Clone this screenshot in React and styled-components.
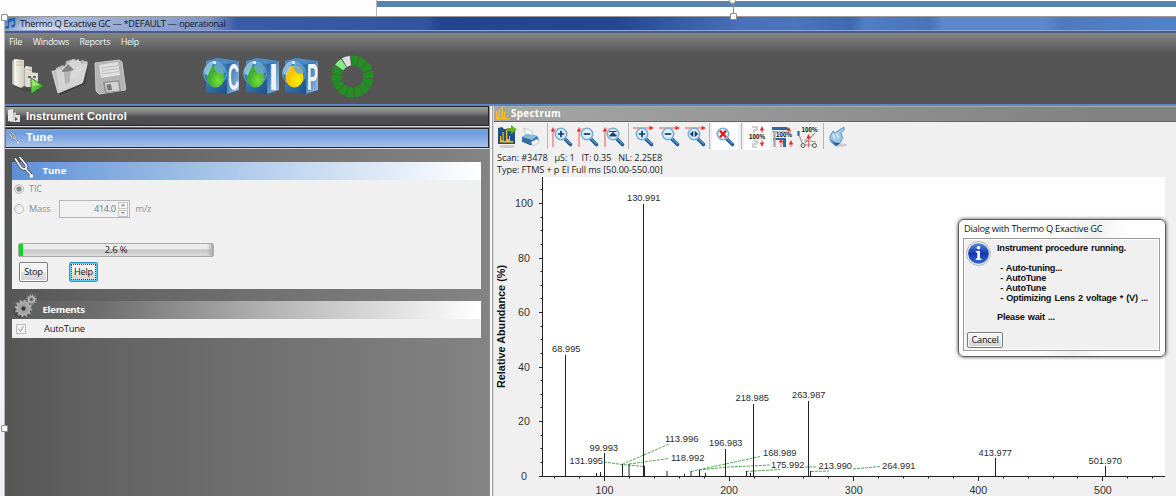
import React from "react";
import styled, { createGlobalStyle } from "styled-components";

const ui = '"Open Sans", "Noto Sans", sans-serif';
const arial = '"Liberation Sans", Arial, sans-serif';

const Global = createGlobalStyle`
  * { box-sizing: border-box; }
  body { margin: 0; background: #fdfdfe; overflow: hidden; }
  svg { display: block; flex: none; overflow: visible; }
`;

const Page = styled.div`
  position: relative; width: 1176px; height: 496px; overflow: hidden;
  display: flex; flex-direction: column;
  background: linear-gradient(180deg, #fdfdfe 20%, #eef0f4 100%);
  font-family: ${ui};
`;
const Ruler = styled.div`
  height: 16px; flex: none; padding-left: 376px; background: #fdfdfe;
`;
const RulerPage = styled.div`
  height: 16px; border-left: 1px solid #b4b8bc; padding-top: 1px; background: #fff;
`;
const RulerBar = styled.div`height: 6px; background: #5a82ae;`;
const AppWindow = styled.div`
  margin-left: 4px; flex: 1; min-height: 0; display: flex; flex-direction: column;
  border-left: 1px solid #b4b4b4; border-top: 1px solid #9c9894; background: #555;
`;
const TitleBar = styled.div`
  height: 16px; flex: none; display: flex; align-items: center; gap: 4px;
  padding: 0 0 1px 0; border-bottom: 2px solid #4a5c88; box-shadow: inset 0 -1px #8fa6d8;
  background:
    radial-gradient(ellipse 55px 16px at 35px 16px, rgba(255,255,255,.75), transparent),
    linear-gradient(90deg, #5878b8 0, #8ca0cc 18px, #a9b8da 60px, #8fa2cf 150px, #7f95c8 205px, #3a5ba5 232px, #33549f 420px, #23458d 436px, #24478f 610px, #3059a0 660px, #4a72b8 740px, #4a74bb 790px, #3f69b1 845px, #527ec4 860px, #4a74b8 925px, #5c87ca 938px, #5c87ca 1040px, #4f7bbd 1056px, #5482c8 1176px);
`;
const Title = styled.span`
  font-size: 9.4px; line-height: 14px; color: #101828; letter-spacing: -0.34px; white-space: nowrap;
`;
const MenuBar = styled.div`
  height: 19px; flex: none; display: flex; align-items: center; gap: 10.500px; padding: 0 0 1px 4px;
  background: linear-gradient(180deg, #848484, #585858);
  font-size: 9px; line-height: 14px; color: #f2f2f2; letter-spacing: -0.28px;
`;
const MainTools = styled.div`
  height: 54px; flex: none; display: flex; align-items: flex-start; padding: 6px 0 0 6px;
  background: #555; border-bottom: 2px solid #5a86c8;
`;
const Gap = styled.div`width: ${p => p.$w}px; flex: none;`;
const Body = styled.div`flex: 1; min-height: 0; display: flex;`;
const Left = styled.div`
  width: 484px; flex: none; display: flex; flex-direction: column;
  background: linear-gradient(90deg, #565656 0, #626262 90px, #838383 480px);
`;
const Splitter = styled.div`
  width: 5px; flex: none; background: linear-gradient(90deg, #8c8c8c 0 1px, #f4f4f4 1px 3px, #a2a2a2 3px 4px, #d8d8d8 4px);
`;
const Section = styled.div`
  height: 20px; flex: none; display: flex; align-items: center; gap: 5px; padding-left: 2px;
  border: 1px solid #24262c; border-left-color: #777;
  margin-bottom: ${p => (p.$active ? 0 : 2)}px;
  background: ${p => p.$active
    ? "linear-gradient(180deg, #7ba6e0 0, #6f9cdb 4px, #88aee2 60%, #a4c3ec)"
    : "linear-gradient(180deg, #a0a0a0 0, #787878 35%, #505050 55%, #4a4a4a)"};
  box-shadow: 0 1px #dcdcdc;
  padding-bottom: ${p => (p.$active ? 1 : 0)}px;
  font: bold 11px/17px ${arial}; color: #fff; letter-spacing: ${p => (p.$active ? 0.5 : 0.1)}px;
`;
const Panel = styled.div`margin: ${p => p.$top}px 8px 0 7px; flex: none;`;
const PanelHead = styled.div`
  height: 18px; position: relative; padding-left: 30.500px;
  background: ${p => p.$blue
    ? "linear-gradient(90deg, #5b90d6 0, #7fa9de 90px, #b3cdec 240px, #fff)"
    : "linear-gradient(90deg, #5c5c5c 0, #6e6e6e 90px, #b0b0b0 250px, #fff)"};
  font: bold 9.6px/18px ${ui}; color: #fff; letter-spacing: ${p => (p.$blue ? 0 : -0.25)}px;
`;
const Badge = styled.div`position: absolute; left: 1px; top: ${p => p.$top}px;`;
const Form = styled.div`
  height: 109px; background: #f0f0f0; display: flex; flex-direction: column; padding-left: 2px;
`;
const Row = styled.div`
  display: flex; align-items: center; height: ${p => p.$h}px; margin-top: ${p => p.$top || 0}px;
  font-size: 9.2px; line-height: 14px; color: #8e8e8e; letter-spacing: -0.15px;
`;
const Radio = styled.span`
  width: 10px; height: 10px; border-radius: 50%; border: 1px solid #bdbdbd; margin-right: 5px;
  background: ${p => (p.$on ? "radial-gradient(circle, #8a8a8a 0 2px, #ddd 3px, #eee)" : "radial-gradient(circle at 6px 6px, #fafafa, #ddd)")};
`;
const Spin = styled.div`
  width: 71px; height: 18px; margin: 0 6px 0 8px; border: 1px solid #b3b7bd; background: #f1f1f1;
  display: flex; align-items: center; justify-content: flex-end; gap: 2px; color: #777; letter-spacing: -0.4px;
`;
const SpinButtons = styled.div`display: flex; flex-direction: column; gap: 1px; margin-right: 1px;`;
const SpinButton = styled.div`
  width: 10px; height: 7px; border: 1px solid #c4c4c4; display: flex; align-items: center; justify-content: center;
`;
const Progress = styled.div`
  width: 196px; height: 14px; margin: 25px 0 0 4px; border: 1px solid #a9a9a9; border-radius: 2px;
  background: linear-gradient(90deg, #09d81e 0 4px, transparent 4px),
    linear-gradient(90deg, transparent 188px, #aaa), linear-gradient(180deg, #ececec 0 40%, #c4c4c4 50%, #dcdcdc);
  font-size: 9.4px; line-height: 12px; text-align: center; color: #222; letter-spacing: -0.15px;
`;
const Buttons = styled.div`display: flex; gap: 21px; margin: 5px 0 0 5px;`;
const Button = styled.div`
  width: ${p => p.$w || 29}px; height: ${p => p.$h || 20}px; border-radius: 2px; flex: none;
  border: 1px solid ${p => (p.$focus ? "#2e9ac8" : "#7c7c7c")};
  box-shadow: inset 0 0 0 1px ${p => (p.$focus ? "#5cc8f0" : "#fafafa")};
  outline: ${p => (p.$focus ? "1px dotted #444" : "none")}; outline-offset: -3px;
  background: linear-gradient(180deg, #f3f3f3 0 48%, #e2e2e2 52%, #d2d2d2);
  font-size: 9.2px; line-height: ${p => (p.$h || 20) - 3}px; text-align: center; color: #111; letter-spacing: -0.25px;
`;
const ElementRow = styled.div`
  height: 19px; background: #f0f0f0; display: flex; align-items: center; padding-left: 4px; gap: 18px;
  font-size: 9.5px; color: #222; letter-spacing: -0.3px;
`;
const Right = styled.div`flex: 1; min-width: 0; display: flex; flex-direction: column; background: #f0f0f0;`;
const SpectrumHead = styled.div`
  height: 16px; flex: none; display: flex; align-items: center; gap: 1px; padding-left: 2px;
  background: linear-gradient(180deg, #aaa 0 1px, rgba(0,0,0,0) 1px), linear-gradient(90deg, #a6a6a6, #828282 600px);
  border-bottom: 1px solid #666; font: bold 9.8px/14px ${ui}; color: #fff; letter-spacing: 0.35px;
`;
const IconBar = styled.div`height: 28px; flex: none; display: flex; align-items: center; padding-left: 1px;`;
const Cell = styled.div`
  width: ${p => p.$w || 26}px; height: 27px; flex: none; background: ${p => (p.$on ? "#fff" : "transparent")};
`;
const Sep = styled.div`width: 1px; height: 26px; margin: 0 2px 0 ${p => p.$l || 1}px; background: #b5b5b5; flex: none;`;
const Info = styled.div`
  height: 27px; flex: none; padding: 2px 0 0 3px; font-size: 9.1px; line-height: 12px; color: #222; white-space: pre;
  letter-spacing: -0.07px;
`;
const Dialog = styled.div`
  position: absolute; left: 958px; top: 219px; width: 208px; height: 138px; padding: 0 5px 5px 4px;
  border: 1px solid #5e5e5e; border-radius: 6px; background: linear-gradient(100deg, #fff 40%, #f1f1f1 60%, #fff 75%);
  box-shadow: 0 0 3px 1px rgba(0,0,0,.45); display: flex; flex-direction: column;
`;
const DialogTitle = styled.div`
  height: 18px; flex: none; font-size: 9.3px; line-height: 18px; color: #111; white-space: nowrap; letter-spacing: -0.27px;
  padding-left: 1px;
`;
const DialogBody = styled.div`
  flex: 1; border: 1px solid #9a9a9a; background: #f0f0f0; box-shadow: inset 0 0 0 1px #fff;
  display: flex; flex-direction: column; padding: 2px 3px;
`;
const DialogMain = styled.div`display: flex; gap: 6px; flex: 1; margin-left: -1px;`;
const Message = styled.div`
  font: bold 9.2px/9.9px ${arial}; color: #111; white-space: pre; padding-top: 3px;
  letter-spacing: -0.25px; word-spacing: 0.9px;
`;
const Handle = styled.div`
  position: absolute; left: ${p => p.$x}px; top: ${p => p.$y}px; width: 7px; height: 7px;
  background: #fff; border: 1px solid #8f8f8f; border-radius: ${p => (p.$round ? "50%" : "1px")};
`;
const Stem = styled.div`position: absolute; left: 733px; top: 4px; width: 1px; height: 10px; background: #909090;`;

const NoteIcon = () => (
  <svg width="11" height="13" viewBox="0 0 11 13">
    <path d="M3.5 10V3L9.5 1.500V8.500M3.500 4.500L9.500 3" stroke="#1e64a8" strokeWidth="1.400" fill="none" />
    <ellipse cx="2.200" cy="10.300" rx="2" ry="1.500" fill="#1e64a8" />
    <ellipse cx="8.200" cy="9" rx="2" ry="1.500" fill="#1e64a8" />
  </svg>
);

const ServerIcon = () => (
  <svg width="34" height="37" viewBox="0 0 34 37">
    <defs>
      <linearGradient id="srv" x1="0" x2="1"><stop offset="0" stopColor="#a8a69c" /><stop offset=".3" stopColor="#f4f1e6" /><stop offset="1" stopColor="#cfcdc4" /></linearGradient>
      <linearGradient id="go" x1="0" y1="0" x2="1" y2="1"><stop offset="0" stopColor="#9df06a" /><stop offset="1" stopColor="#138a12" /></linearGradient>
    </defs>
    <path d="M0 28L14 30L30 31L26 34L12 33Z" fill="#3f3f3f" opacity=".5" />
    <path d="M1 3L4 1L13 2V28L10 30L1 26Z" fill="url(#srv)" />
    <path d="M4 1V27" stroke="#fff" /><path d="M5 4H12M5 7H12" stroke="#c8bfa6" />
    <path d="M13 10L15 8L21 9V29L13 28Z" fill="url(#srv)" /><path d="M15 12H20M15 15H20" stroke="#b9ac8c" />
    <path d="M15 16L17 14L27 15V29L15 29Z" fill="#dedcd5" /><path d="M17 18H20V20H17ZM22 18H25V20H22Z" fill="#666" />
    <path d="M20 20L33 28L20 36Z" fill="url(#go)" stroke="#1c6f14" strokeWidth=".8" />
    <path d="M21.500 22.500L29 27L21.500 28Z" fill="#b7f78f" opacity=".6" />
  </svg>
);

const FolderIcon = () => (
  <svg width="38" height="37" viewBox="0 0 38 37">
    <path d="M7 36L33 25L38 5L34 26L9 37Z" fill="#3c3c3c" />
    <path d="M5 10L12 7L14 9L15 3L24 1L26 5L31 2L37 4L32 24L8 33Z" fill="#b5b5b5" />
    <path d="M11 10L22 1L24 3L27 1L31 6L29 18L11 24Z" fill="#d4d4d4" />
    <path d="M10 14L17 6L23 12L20 12.500V18H13V14Z" fill="#808080" />
    <path d="M1 13L9 10L12 15L22 13L36 3L31 25L7 35Z" fill="#dadada" opacity=".82" />
    <path d="M1 13L7 35L31 25L36 6" fill="none" stroke="#eee" strokeWidth=".8" />
    <path d="M13 14L19 13L19 24L14 26Z" fill="#b4b4b4" />
  </svg>
);

const FloppyIcon = () => (
  <svg width="34" height="37" viewBox="0 0 34 37">
    <path d="M4 35L33 33L29 3L31 32Z" fill="#3c3c3c" />
    <path d="M1 5L25 2L28 4L32 32L5 36L2 33Z" fill="#b4b4b4" stroke="#d8d8d8" strokeWidth=".8" />
    <path d="M5 7L24 4L26 17L7 20Z" fill="#e0e0e0" />
    <path d="M7 10L24 7.500M7.500 13L24 10.500M8 16L25 13.500" stroke="#bdbdbd" />
    <path d="M9 24L25 22L27 33L11 35Z" fill="#8e8e8e" />
    <path d="M11 25L24 23.500L25.500 32.500L12.500 34Z" fill="#d2d2d2" />
    <path d="M12.500 26.500L17 26L18 32L13.500 32.500Z" fill="#777" />
  </svg>
);

const CubeIcon = ({ letter, a, b, id, lx = 25, lw = 11 }) => (
  <svg width="37" height="37" viewBox="0 0 37 37">
    <defs>
      <linearGradient id={"f" + id} x1="0" y1="0" x2="1" y2="1"><stop offset="0" stopColor="#5297cc" /><stop offset="1" stopColor="#123f7c" /></linearGradient>
      <linearGradient id={"s" + id} x1="0" y1="0" x2="1" y2="1"><stop offset="0" stopColor="#1f5a9c" /><stop offset="1" stopColor="#9cc8ea" /></linearGradient>
      <radialGradient id={"b" + id} cx=".65" cy=".7"><stop offset="0" stopColor={a} /><stop offset="1" stopColor={b} /></radialGradient>
    </defs>
    <path d="M3 3L22 1L36 4V32L24 36L3 34Z" fill={"url(#f" + id + ")"} />
    <path d="M24 6L36 3V32L24 36Z" fill={"url(#s" + id + ")"} />
    <path d="M3 3L14 0L36 3L24 6Z" fill="#4a8cc4" />
    <circle cx="12" cy="15.500" r="11.500" fill="#2c74b4" stroke="#7fb4da" strokeWidth=".8" />
    <ellipse cx="12.500" cy="18.500" rx="9" ry="11" fill={"url(#b" + id + ")"} />
    <path d="M1 13C3 6 7 3 12 3C9 7 8 11 5 17C3 18 1 17 1 13Z" fill="#a8d0ea" opacity=".75" />
    <path d="M12 3C18 4 22 9 22 14C18 19 12 14 11 9Z" fill="#6fa9d2" opacity=".8" />
    <circle cx="11.500" cy="4.500" r="1.500" fill="#fff" />
    <text x={lx} y="32" fontFamily={arial} fontWeight="bold" fontSize="36" textLength={lw} lengthAdjust="spacingAndGlyphs" fill="#f2f4f6">{letter}</text>
  </svg>
);

const N = 14;
const Spinner = () => (
  <svg width="43" height="43" viewBox="-21.500 -20.500 43 43">
    {Array.from({ length: N }, (_, i) => {
      const p = (r, t) => `${(r * Math.sin(t)).toFixed(2)} ${(-r * Math.cos(t)).toFixed(2)}`;
      const s = ((i * 360) / N - 6 + 1.5) * Math.PI / 180;
      const e = (((i + 1) * 360) / N - 6 - 1.5) * Math.PI / 180;
      const fill = i === N - 1 ? "#dedede" : i === N - 2 ? "#82ee82" : "#228f22";
      return <path key={i} fill={fill} transform="translate(0 -2)" d={`M${p(21, s)}A21 21 0 0 1 ${p(21, e)}L${p(11, e)}A11 11 0 0 0 ${p(11, s)}Z`} />;
    })}
  </svg>
);

const Fork = ({ size = 24, color = "#f4f4f4", edge = "#444" }) => (
  <svg width={size} height={size} viewBox="0 0 24 24" fill="none" strokeLinecap="round">
    <g stroke={edge} strokeWidth="3.200"><path d="M2.500 4L8 12.500Q11 15 13 13.500Q14.500 11.500 12 8.500L7 2.500M13 14L19 21" /></g>
    <g stroke={color} strokeWidth="1.800"><path d="M2.500 4L8 12.500Q11 15 13 13.500Q14.500 11.500 12 8.500L7 2.500M13 14L18 20" /></g>
    <circle cx="18.500" cy="21" r="1.900" fill={color} />
  </svg>
);

const MiniServer = () => (
  <svg width="13" height="14" viewBox="0 0 13 14">
    <path d="M0 1L5 0V13L0 12Z" fill="#e8e8e8" /><path d="M5 4L8 3V13H5Z" fill="#c8c8c8" /><path d="M8 6H12V13H6V8Z" fill="#e2e2e2" /><path d="M7 8L10 10L7 12Z" fill="#555" />
  </svg>
);

const Gear = ({ cx, cy, r }) => (
  <g>
    <circle cx={cx} cy={cy} r={r} fill="none" stroke="#a4a4a4" strokeWidth="2.600" strokeDasharray={`${(2 * Math.PI * r) / 24}`} />
    <circle cx={cx} cy={cy} r={r - 0.8} fill="#a3a3a3" stroke="#cfcfcf" strokeWidth=".7" />
    <circle cx={cx} cy={cy} r={r / 3.4} fill="#333" stroke="#777" />
  </g>
);
const GearsIcon = () => (
  <svg width="24" height="24" viewBox="0 0 24 24">
    <ellipse cx="9" cy="17" rx="9" ry="7" fill="#333" opacity=".5" />
    <Gear cx={10.5} cy={14.5} r={7.5} /><Gear cx={18.5} cy={5.5} r={4} />
  </svg>
);

const Peaks = () => (
  <svg width="14" height="13" viewBox="0 0 14 13">
    <path d="M0 12V4H1.500V10H2.500V2H3.800V11H5.500V0H7V9.500H8V5H9V11H10.500V9.500H11.500V11.500H13.500V12.500H0Z" fill="#f8bc1c" />
  </svg>
);

const Arrow = ({ dir, x = 0, y = 0, len = 18 }) => {
  const t = { up: 0, right: 90, down: 180 }[dir];
  return <g transform={`translate(${x} ${y}) rotate(${t})`}><path d={`M0 ${len}V2`} stroke="#f46060" strokeWidth="1.100" /><path d="M-2.300 4.500L0 0L2.300 4.500Z" fill="#e83030" /></g>;
};

const Zoom = ({ sym, axis }) => (
  <svg width="26" height="27" viewBox="0 0 26 27">
    {axis === "y" && <><Arrow dir="up" x={3} y={4} len={20} /><path d="M3 5.500H14" stroke="#f4b4b4" strokeWidth=".8" /></>}
    {axis === "x" && <Arrow dir="right" x={23} y={5} len={21} />}
    <path d="M15 16L20.500 21.500" stroke="#245a92" strokeWidth="3.600" strokeLinecap="round" />
    <path d="M15 15.500L20.500 20.500" stroke="#5b94c8" strokeWidth="1.400" strokeLinecap="round" />
    <circle cx="11" cy="11" r="5.700" fill="#dceffb" stroke="#79add2" strokeWidth="1.600" />
    {sym === "+" && <path d="M7.800 11H14.200M11 7.800V14.200" stroke="#133a6c" strokeWidth="1.700" />}
    {sym === "-" && <path d="M7.800 11H14.200" stroke="#133a6c" strokeWidth="1.700" />}
    {sym === "v" && <path d="M7.500 8.500H14.500M11 9.500L7.500 13H14.500Z" stroke="#133a6c" fill="#133a6c" strokeWidth="1" />}
    {sym === "h" && <path d="M10.300 7.700V14.300L6.800 11ZM11.700 7.700V14.300L15.200 11Z" fill="#133a6c" />}
    {sym === "x" && <path d="M8 7.800L14 14.200M14 7.800L8 14.200" stroke="#ee1111" strokeWidth="2.200" />}
  </svg>
);

const Pct = ({ x, y }) => <text x={x} y={y} fontFamily={arial} fontWeight="bold" fontSize="7.300" textLength="16" lengthAdjust="spacingAndGlyphs" fill="#111" stroke="#f4f4f4" strokeWidth="1.400" paintOrder="stroke">100%</text>;

const ExportIcon = () => (
  <svg width="25" height="27" viewBox="0 0 25 27">
    <ellipse cx="12" cy="23.500" rx="8" ry="1.600" fill="#ccc" />
    <path d="M3 5L7 4L9 6H20V21H3Z" fill="#1c5288" />
    <path d="M5 19V13H6.200V17H7.500V9H8.700V18H11V7H12.200V16H14V13H15V18H18V19.500H5Z" fill="#f4bd26" />
    <path d="M12 5H16V2L22 6.500L16 11V8H12Z" fill="#62b51e" />
  </svg>
);
const PrinterIcon = () => (
  <svg width="26" height="27" viewBox="0 0 26 27">
    <path d="M4 5L12 8L14 15L6 13Z" fill="#fff" stroke="#b4bcc4" strokeWidth=".8" />
    <path d="M2 14L7 11L17 13L19 17L12 22L2 18Z" fill="#2f6ea8" />
    <path d="M2 14L7 11L17 13L12 17Z" fill="#8abadf" />
    <path d="M11 19L17 16L20 19L13 23Z" fill="#f8f8f8" stroke="#aaa" strokeWidth=".5" />
    <path d="M2 18L11 22" fill="none" stroke="#1f4e80" />
  </svg>
);
const ScaleIcon = () => (
  <svg width="26" height="27" viewBox="0 0 26 27">
    <g fill="none" stroke="#c4c4c4" strokeWidth="1.600"><path d="M8 4H13V7H10V10M9 18H13V21H9V24H13" /></g>
    <Arrow dir="up" x={18} y={3} len={7} /><Arrow dir="down" x={18} y={24} len={7} />
    <Pct x={5} y={16} />
  </svg>
);
const ShopIcon = () => (
  <svg width="26" height="27" viewBox="0 0 26 27">
    <path d="M2 4H17L19 6V7H2ZM3 15H16V17H3ZM13 17H16V24H13Z" fill="#2e659c" />
    <path d="M2 8.500H19" stroke="#999" /><path d="M4.500 8V24" stroke="#a8a8a8" strokeWidth="2.400" />
    <Arrow dir="up" x={11} y={15} len={9} /><Arrow dir="up" x={21} y={17} len={7} /><Arrow dir="up" x={19} y={4} len={8} />
    <Pct x={6} y={13.500} />
  </svg>
);
const CartIcon = () => (
  <svg width="26" height="27" viewBox="0 0 26 27">
    <path d="M2.500 8V13" stroke="#2e659c" strokeWidth="2.200" />
    <path d="M3 12L7 22H20M9 20L19 10M8 17L20 19" stroke="#999" strokeWidth="1.200" fill="none" />
    <circle cx="7" cy="22.500" r="2" fill="#eee" stroke="#555" /><circle cx="18.500" cy="22.500" r="2" fill="#eee" stroke="#555" />
    <Arrow dir="up" x={12.500} y={11} len={13} />
    <Pct x={5.500} y={9} />
  </svg>
);
const HandIcon = () => (
  <svg width="26" height="27" viewBox="0 0 26 27">
    <ellipse cx="15" cy="22" rx="6" ry="1.800" fill="#ccc" />
    <g transform="translate(1 0)">
      <path d="M3 13L6 8L8 10L11 8L15 5Q18 3.500 17.500 6L14 10L15.500 15L13 20L9 23L5 20L3 17Z" fill="#9cc8ea" stroke="#4f8dc2" strokeWidth=".9" />
      <path d="M3 16L9 23L13 20L8 19.500Z" fill="#1f5f9e" />
      <path d="M6 11L8 16M9.500 10L11.500 15" stroke="#e4f2fb" strokeWidth="1.400" fill="none" />
    </g>
  </svg>
);
const InfoIcon = () => (
  <svg width="25" height="25" viewBox="0 0 25 25">
    <defs><linearGradient id="inf" x1="0" y1="0" x2="0" y2="1"><stop offset="0" stopColor="#5a86dc" /><stop offset=".5" stopColor="#1438ae" /><stop offset="1" stopColor="#3468d8" /></linearGradient></defs>
    <circle cx="12.500" cy="12.500" r="12" fill="#e8e8e8" stroke="#a8a8a8" strokeWidth=".8" />
    <circle cx="12.500" cy="12.500" r="10.300" fill="url(#inf)" />
    <circle cx="12.500" cy="6.800" r="1.800" fill="#fff" />
    <path d="M9.800 10H14V17.500H15.500V19H9.800V17.500H11.300V11.500H9.800Z" fill="#fff" />
  </svg>
);

const X = m => 604.5 + (m - 100) * 1.246;
const Y = v => 476 - v * 2.725;
const peaks = [
  [565.5, 355], [596.5, 473], [600.5, 472], [604.5, 453], [622.5, 464], [629, 464], [643.5, 204], [644.5, 466],
  [667, 471], [684.5, 474], [691, 471], [699.5, 470], [705.5, 473], [725.5, 449], [746.5, 471], [750.5, 473],
  [753.5, 404], [808.5, 401], [810.5, 471], [995.5, 458], [1105.5, 466],
];
const labels = [
  ["68.995", 552, 352], ["130.991", 627, 201], ["99.993", 589.5, 450.500], ["131.995", 569.5, 463.500],
  ["113.996", 665, 442], ["118.992", 671, 460.500], ["196.983", 709, 446], ["218.985", 735.5, 401],
  ["263.987", 792, 397.500], ["168.989", 763, 456], ["175.992", 771, 467.500], ["213.990", 818.5, 469],
  ["264.991", 882, 469], ["413.977", 978.5, 455.500], ["501.970", 1088.5, 463.500],
];
const leaders = [
  "M604 462L622 464.500L644 466.500", "M622 464.500L669 444", "M629 464L669 458.500",
  "M691 471.500L760 456.500", "M699 470L729 467L770 465", "M746 471.500L780 469.500M805 467L817 467",
  "M811 471.500L829 471M853 469L880 466.500",
];

const Chart = () => (
  <svg width="682" height="319" viewBox="494 177 682 319" fontFamily={arial}>
    <rect x="542" y="177" width="623" height="299" fill="#fff" />
    <g stroke="#2b8f2b" strokeWidth=".8" strokeDasharray="3 1" fill="none">
      {leaders.map(d => <path key={d} d={d} />)}
    </g>
    <g stroke="#222" strokeWidth="1">
      {peaks.map(([x, y], i) => <path key={i} d={`M${x} ${y}V476`} />)}
      <path d="M542.500 177V476.500M539 476.500H1165" />
      {Array.from({ length: 22 }, (_, i) => i * 5).map(v => <path key={v} d={`M${v % 20 ? 540.5 : 539} ${Math.floor(Y(v)) + 0.5}H542`} />)}
      {Array.from({ length: 25 }, (_, i) => 60 + i * 20).map(v => <path key={v} d={`M${Math.floor(X(v)) + 0.5} 476V${v % 100 ? 478.500 : 481}`} />)}
    </g>
    <g fontSize="9.300" fill="#2a2a2a">
      {labels.map(([t, x, y]) => <text key={t} x={x} y={y} textLength={t.length === 7 ? 33.5 : 28.500} lengthAdjust="spacingAndGlyphs">{t}</text>)}
    </g>
    <g fontSize="10.700" fill="#333" textAnchor="middle">
      {[0, 20, 40, 60, 80, 100].map(v => <text key={v} x="524" y={Y(v) + 3.5}>{v}</text>)}
      {[100, 200, 300, 400, 500].map(v => <text key={v} x={X(v)} y="494">{v}</text>)}
    </g>
    <text transform="translate(505 388) rotate(-90)" fontSize="10" fontWeight="bold" textLength="123" lengthAdjust="spacingAndGlyphs" fill="#111">Relative Abundance (%)</text>
  </svg>
);

export default function App() {
  return (
    <Page>
      <Global />
      <Ruler><RulerPage><RulerBar /></RulerPage></Ruler>
      <AppWindow>
        <TitleBar><NoteIcon /><Title>Thermo Q Exactive GC — *DEFAULT — operational</Title></TitleBar>
        <MenuBar><span>File</span><span>Windows</span><span>Reports</span><span>Help</span></MenuBar>
        <MainTools>
          <ServerIcon /><Gap $w={6} /><FolderIcon /><Gap $w={5} /><FloppyIcon /><Gap $w={75} />
          <CubeIcon letter="C" a="#7ae02c" b="#3fae3a" id="c" /><Gap $w={3} />
          <CubeIcon letter="I" a="#7ae02c" b="#3fae3a" id="i" lx={26} lw={9} /><Gap $w={2} />
          <CubeIcon letter="P" a="#fff000" b="#f6c400" id="p" /><Gap $w={12} />
          <Spinner />
        </MainTools>
        <Body>
          <Left>
            <Section><MiniServer />Instrument Control</Section>
            <Section $active><Fork size={13} color="#e8e8e8" edge="#777" />Tune</Section>
            <Panel $top={14}>
              <PanelHead $blue><Badge $top={-7}><Fork /></Badge>Tune</PanelHead>
              <Form>
                <Row $h={12} $top={3}><Radio $on />TIC</Row>
                <Row $h={18} $top={5}>
                  <Radio />Mass
                  <Spin>414.0
                    <SpinButtons>
                      <SpinButton><svg width="4" height="2"><path d="M0 2L2 0L4 2Z" fill="#888" /></svg></SpinButton>
                      <SpinButton><svg width="4" height="2"><path d="M0 0L2 2L4 0Z" fill="#888" /></svg></SpinButton>
                    </SpinButtons>
                  </Spin>
                  m/z
                </Row>
                <Progress>2.6 %</Progress>
                <Buttons><Button>Stop</Button><Button $focus>Help</Button></Buttons>
              </Form>
            </Panel>
            <Panel $top={12}>
              <PanelHead><Badge $top={-7}><GearsIcon /></Badge>Elements</PanelHead>
              <ElementRow>
                <svg width="10" height="10"><rect x=".5" y=".5" width="9" height="9" fill="#f4f4f4" stroke="#bbb" /><path d="M2.500 5L4.500 7.500L7.500 2" fill="none" stroke="#999" /></svg>
                AutoTune
              </ElementRow>
            </Panel>
          </Left>
          <Splitter />
          <Right>
            <SpectrumHead><Peaks />Spectrum</SpectrumHead>
            <IconBar>
              <Cell $w={25}><ExportIcon /></Cell><Cell><PrinterIcon /></Cell><Sep />
              <Cell><Zoom sym="+" axis="y" /></Cell><Cell><Zoom sym="-" axis="y" /></Cell><Cell $w={25}><Zoom sym="v" axis="y" /></Cell><Sep />
              <Cell><Zoom sym="+" axis="x" /></Cell><Cell><Zoom sym="-" axis="x" /></Cell><Cell $w={25}><Zoom sym="h" axis="x" /></Cell><Sep />
              <Cell $on><Zoom sym="x" /></Cell><Sep $l={3} />
              <Cell $on><ScaleIcon /></Cell><Cell><ShopIcon /></Cell><Cell><CartIcon /></Cell><Sep />
              <Cell><HandIcon /></Cell>
            </IconBar>
            <Info>{"Scan: #3478   µS: 1   IT: 0.35   NL: 2.25E8\nType: FTMS + p EI Full ms [50.00-550.00]"}</Info>
            <Chart />
          </Right>
        </Body>
      </AppWindow>
      <Dialog>
        <DialogTitle>Dialog with Thermo Q Exactive GC</DialogTitle>
        <DialogBody>
          <DialogMain>
            <InfoIcon />
            <Message>{"Instrument procedure running.\n\n - Auto-tuning...\n - AutoTune\n - AutoTune\n - Optimizing Lens 2 voltage * (V) ...\n\nPlease wait ..."}</Message>
          </DialogMain>
          <Button $w={36} $h={16}>Cancel</Button>
        </DialogBody>
      </Dialog>
      <Stem />
      <Handle $x={1} $y={14} /><Handle $x={730} $y={13} /><Handle $x={1} $y={425} />
      <Handle $x={729} $y={-3} $round />
    </Page>
  );
}
